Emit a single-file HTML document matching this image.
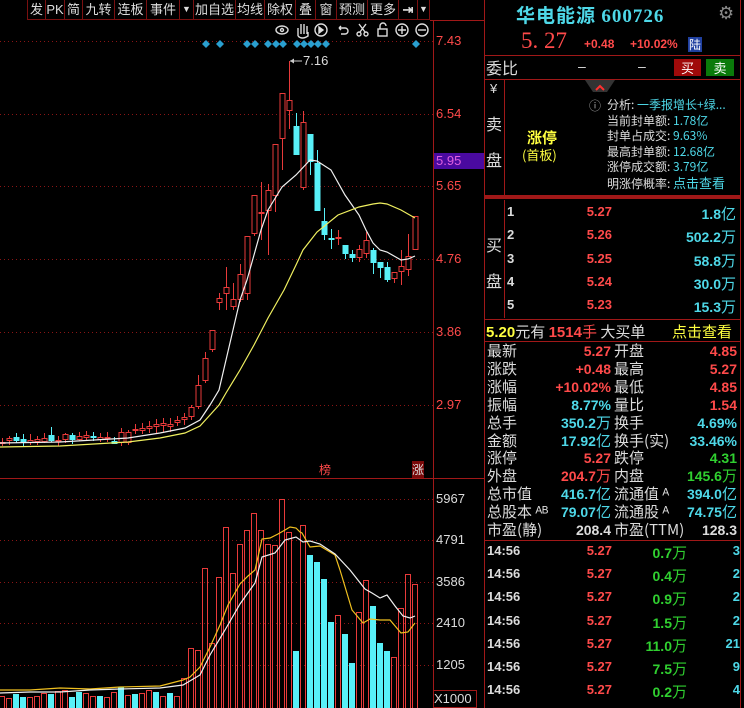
<!DOCTYPE html>
<html><head><meta charset="utf-8">
<style>
*{margin:0;padding:0;box-sizing:border-box}
body{width:744px;height:708px;background:#000;overflow:hidden;position:relative;font-family:"Liberation Sans","Noto Sans CJK SC",sans-serif;color:#ddd}
.a{position:absolute;white-space:nowrap}
.cj{font-family:"Noto Sans CJK SC","WenQuanYi Zen Hei",sans-serif}
.r{color:#ff4a4a}.c{color:#4ed8e8}.g{color:#30d030}.y{color:#ffff40}.w{color:#dcdcdc}
.b{font-weight:bold}
.tb{position:absolute;top:0;height:20px;border-right:1px solid #7a1010;border-bottom:1px solid #7a1010;font-size:13px;line-height:19px;text-align:center;color:#ddd;font-family:"Liberation Sans","Noto Sans CJK SC",sans-serif;overflow:hidden;white-space:nowrap}
.st{font-size:15px;line-height:18px}
.num{font-size:14px;font-weight:bold;text-align:right}
</style></head><body>
<svg class="a" style="left:0;top:0" width="744" height="708">
<g stroke="#8a1515" stroke-width="1" stroke-dasharray="1,3">
<line x1="0" y1="41.5" x2="433" y2="41.5"/><line x1="0" y1="114.5" x2="433" y2="114.5"/><line x1="0" y1="186.5" x2="433" y2="186.5"/><line x1="0" y1="259.5" x2="433" y2="259.5"/><line x1="0" y1="332.5" x2="433" y2="332.5"/><line x1="0" y1="405.5" x2="433" y2="405.5"/>
<line x1="0" y1="499.5" x2="433" y2="499.5"/><line x1="0" y1="540.5" x2="433" y2="540.5"/><line x1="0" y1="582.5" x2="433" y2="582.5"/><line x1="0" y1="623.5" x2="433" y2="623.5"/><line x1="0" y1="665.5" x2="433" y2="665.5"/>
</g>
<g stroke="#a01818" stroke-width="1">
<line x1="433.5" y1="20" x2="433.5" y2="708"/><line x1="484.5" y1="0" x2="484.5" y2="708"/><line x1="740.5" y1="0" x2="740.5" y2="708"/>
<line x1="0" y1="478.5" x2="484" y2="478.5"/>
<line x1="430" y1="20.5" x2="484" y2="20.5"/>
<line x1="485" y1="55.5" x2="740" y2="55.5"/><line x1="485" y1="79.5" x2="740" y2="79.5"/>
<line x1="504.5" y1="80" x2="504.5" y2="195"/><line x1="504.5" y1="200" x2="504.5" y2="318"/>
<line x1="485" y1="319.5" x2="740" y2="319.5"/><line x1="485" y1="341.5" x2="740" y2="341.5"/><line x1="485" y1="540.5" x2="740" y2="540.5"/>
</g>
<rect x="485" y="195" width="255" height="4" fill="#a01818"/>
<rect x="434" y="153" width="50" height="16" fill="#4a0aa0"/>
<rect x="412" y="461" width="12" height="17" fill="#7a0a0a"/>
<rect x="433.5" y="690.5" width="43" height="17" fill="none" stroke="#a01818"/>
<polygon points="585,80 615,80 607,92 593,92" fill="#333"/>
<polyline points="596,90 600,86 604,90" fill="none" stroke="#ff3030" stroke-width="2"/>
<g fill="#2a9fd0" id="dia"></g>
<g id="vb"></g><g id="cd"></g>
<g fill="none" stroke="#ddd" stroke-width="1.4">
<ellipse cx="282" cy="30" rx="6" ry="4"/><circle cx="282" cy="30" r="1.5"/>
<path d="M298 36 v-8 M301 34 v-10 M304 34 v-10 M307 34 v-8 M298 36 q4 4 10 0 v-4"/>
<circle cx="321" cy="30" r="6"/><path d="M319 27 l4 3 l-4 3z" fill="#ddd"/>
<path d="M339 28 h6 a3 3 0 0 1 0 6 h-4 M339 28 l2 -2 M339 28 l2 2"/>
<circle cx="359" cy="34" r="2"/><circle cx="366" cy="34" r="2"/><path d="M360 32 l6 -8 M365 32 l-6 -8"/>
<rect x="378" y="29" width="9" height="7"/><path d="M380 29 v-3 a3 3 0 0 1 6 0"/>
<circle cx="402" cy="30" r="6"/><path d="M398 30 h8 M402 26 v8"/>
<circle cx="422" cy="30" r="6"/><path d="M418 30 h8"/>
</g>
<g id="ml"></g>
<line x1="290" y1="61" x2="302" y2="61" stroke="#ccc"/>
</svg>

<div class="tb cj" style="left:27px;width:19px;border-left:1px solid #7a1010">发</div>
<div class="tb" style="left:46px;width:19px">PK</div>
<div class="tb cj" style="left:65px;width:18px">简</div>
<div class="tb cj" style="left:83px;width:32px">九转</div>
<div class="tb cj" style="left:115px;width:32px">连板</div>
<div class="tb cj" style="left:147px;width:33px">事件</div>
<div class="tb" style="left:180px;width:14px;font-size:9px">▼</div>
<div class="tb cj" style="left:194px;width:42px">加自选</div>
<div class="tb cj" style="left:236px;width:29px">均线</div>
<div class="tb cj" style="left:265px;width:31px">除权</div>
<div class="tb cj" style="left:296px;width:20px">叠</div>
<div class="tb cj" style="left:316px;width:21px">窗</div>
<div class="tb cj" style="left:337px;width:31px">预测</div>
<div class="tb cj" style="left:368px;width:31px">更多</div>
<div class="tb b" style="left:399px;width:19px;font-size:13px">⇥</div>
<div class="tb" style="left:418px;width:12px;font-size:9px">▼</div>

<div class="a r" style="left:436px;top:33px;font-size:13px">7.43</div>
<div class="a r" style="left:436px;top:106px;font-size:13px">6.54</div>
<div class="a" style="left:436px;top:153px;font-size:13px;color:#e060e0">5.95</div>
<div class="a r" style="left:436px;top:178px;font-size:13px">5.65</div>
<div class="a r" style="left:436px;top:251px;font-size:13px">4.76</div>
<div class="a r" style="left:436px;top:324px;font-size:13px">3.86</div>
<div class="a r" style="left:436px;top:397px;font-size:13px">2.97</div>
<div class="a w" style="left:436px;top:491px;font-size:13px">5967</div>
<div class="a w" style="left:436px;top:532px;font-size:13px">4791</div>
<div class="a w" style="left:436px;top:574px;font-size:13px">3586</div>
<div class="a w" style="left:436px;top:615px;font-size:13px">2410</div>
<div class="a w" style="left:436px;top:657px;font-size:13px">1205</div>
<div class="a w" style="left:434px;top:691px;font-size:13px">X1000</div>
<div class="a w" style="left:303px;top:53px;font-size:13px">7.16</div>
<div class="a r cj" style="left:319px;top:461px;font-size:12px">榜</div>
<div class="a w cj" style="left:412px;top:461px;font-size:12px">涨</div>

<div class="a c cj b" style="left:516px;top:1px;font-size:19px;letter-spacing:1px">华电能源 <span style="font-family:'Liberation Serif',serif">600726</span></div>
<div class="a" style="left:718px;top:3px;font-size:18px;color:#888">⚙</div>
<div class="a r" style="left:521px;top:28px;font-size:23px;font-family:'Liberation Serif',serif">5. 27</div>
<div class="a r b" style="left:584px;top:37px;font-size:12px">+0.48</div>
<div class="a r b" style="left:630px;top:37px;font-size:12px">+10.02%</div>
<div class="a cj" style="left:688px;top:37px;font-size:12px;background:#2040a0;color:#fff;padding:0 1px;line-height:15px">陆</div>
<div class="a w cj" style="left:486px;top:56px;font-size:16px;line-height:22px">委比</div>
<div class="a w" style="left:578px;top:58px;font-size:14px">–</div>
<div class="a w" style="left:638px;top:58px;font-size:14px">–</div>
<div class="a cj" style="left:674px;top:59px;width:27px;height:17px;background:#a00a0a;color:#fff;font-size:13px;text-align:center;line-height:17px">买</div>
<div class="a cj" style="left:706px;top:59px;width:28px;height:17px;background:#0a7a0a;color:#fff;font-size:13px;text-align:center;line-height:17px">卖</div>
<div class="a w" style="left:490px;top:81px;font-size:13px">¥</div>
<div class="a w cj" style="left:486px;top:111px;font-size:16px">卖</div>
<div class="a w cj" style="left:486px;top:147px;font-size:16px">盘</div>
<div class="a y cj b" style="left:527px;top:127px;font-size:15px">涨停</div>
<div class="a y cj" style="left:522px;top:145px;font-size:13px">(首板)</div>
<div class="a cj" style="left:589px;top:97px;font-size:12px;color:#aaa">ⓘ</div>
<div class="a cj" style="left:607px;top:97px;font-size:12px;line-height:15.6px"><span class="w">分析: </span><span class="c">一季报增长+绿...</span><br><span class="w">当前封单额: </span><span class="c">1.78亿</span><br><span class="w">封单占成交: </span><span class="c">9.63%</span><br><span class="w">最高封单额: </span><span class="c">12.68亿</span><br><span class="w">涨停成交额: </span><span class="c">3.79亿</span><br><span class="w">明涨停概率: </span><span class="c" style="font-size:13px">点击查看</span></div>

<div class="a w cj" style="left:486px;top:232px;font-size:16px">买</div>
<div class="a w cj" style="left:486px;top:268px;font-size:16px">盘</div>
<div id="bk"></div>
<div class="a cj" style="left:486px;top:321px;font-size:15px"><span class="y b" style="font-family:'Liberation Sans'">5.20</span><span class="w">元有 </span><span class="r b" style="font-family:'Liberation Sans'">1514</span><span class="r">手 </span><span class="w">大买单</span></div>
<div class="a y cj" style="left:672px;top:321px;font-size:15px">点击查看</div>
<div id="stt"></div>
<div id="trd"></div>

<script>
(function(){
var NS="http://www.w3.org/2000/svg";
function el(p,t,a){var e=document.createElementNS(NS,t);for(var k in a)e.setAttribute(k,a[k]);p.appendChild(e);return e;}
var cd=document.getElementById('cd'),vb=document.getElementById('vb'),dia=document.getElementById('dia'),ml=document.getElementById('ml');
var R="#e83a3a",C="#58f0f8";
var cs=[];
var early=[[441,444,1],[442,444,0],[438,441,0],[437,441,1],[439,442,1],[440,443,0],[439,442,0],[438,442,0],[435,441,1],[440,442,0],[434,440,0],[435,440,1],[436,440,0],[435,438,0],[436,438,1],[437,440,0],[437,439,0],[441,444,1],[432,443,0]];
var hiL=[[439,446],[438,446],[436,445],[433,443],[434,446],[434,445],[436,445],[433,443],[427,442],[436,446],[433,443],[433,444],[432,441],[431,440],[432,441],[433,442],[432,442],[437,444],[428,446]];
for(var i=0;i<early.length;i++){cs.push([0,early[i][0],early[i][1],hiL[i][0],hiL[i][1],early[i][2]]);}
cs.push([0,432,443,430,445,0]);
var mids=[[136,429,431,424,434,0],[143,428,431,423,434,0],[150,426,429,421,433,0],[157,424,427,419,433,0],[164,423,426,418,432,0],[171,424,427,418,432,0],[178,420,423,416,426,0],[185,417,420,413,425,0],[191,407,417,405,420,0],[198,385,407,375,409,0],[205,358,381,352,383,0],[212,330,350,330,352,0]];
cs=cs.concat(mids);
var late=[[219,298,303,293,310,0],[226,287,294,267,310,0],[233,299,307,283,310,0],[240,274,300,264,302,0],[247,236,294,236,300,0],[254,195,234,195,236,0],[261,212,214,182,240,0],[268,190,211,184,255,0],[275,144,196,144,212,0],[282,93,139,93,170,0],[289,100,111,61,129,0],[296,126,155,113,155,1],[303,122,188,111,190,0],[310,134,162,134,175,1],[317,163,211,150,211,1],[324,221,235,208,240,1],[331,238,240,229,249,1],[338,237,239,230,245,0],[345,245,254,245,259,1],[352,254,258,250,262,1],[359,249,258,245,262,0],[366,240,254,232,258,0],[373,250,263,248,274,1],[380,262,268,262,278,1],[387,267,280,262,282,1],[394,272,279,272,283,0],[401,266,272,250,285,0],[408,256,270,234,276,0],[415,216,250,216,250,0]];
cs=cs.concat(late);
var n=cs.length;for(var i=0;i<n;i++){cs[i][0]=415-(n-1-i)*7;}
cs.forEach(function(c){var col=c[5]?C:R;var x=c[0];
el(cd,'line',{x1:x+.5,x2:x+.5,y1:c[3],y2:c[4],stroke:col});
var h=Math.max(1,c[2]-c[1]);
if(c[5])el(cd,'rect',{x:x-2.5,y:c[1],width:6,height:h,fill:col});
else el(cd,'rect',{x:x-2,y:c[1]+.5,width:5,height:Math.max(1,h-1),fill:'#000',stroke:col});});
var vt=[693,696,698,694,697,697,696,693,694,691,690,697,692,693,696,696,697,692,687,695,694,693,690,692,696];
var vc=[1,0,0,1,1,0,0,0,1,0,0,1,1,0,0,1,0,0,1,0,1,0,0,1,0];
var vl=[678,648,650,568,643,577,527,573,544,530,513,530,544,545,499,532,651,525,555,562,579,622,615,634,663,612,580,606,643,651,657,608,574,584];
var cyi=[16,18,19,20,21,23,24,27,28,29];
for(var i=0;i<n;i++){var x=415-(n-1-i)*7,k=i-(n-vl.length),tp,cy;
if(k>=0){tp=vl[k];cy=cyi.indexOf(k)>=0;}else{tp=vt[i%vt.length];cy=vc[i%vc.length];}
if(cy)el(vb,'rect',{x:x-3,y:tp,width:6,height:708-tp,fill:C});
else el(vb,'rect',{x:x-2.5,y:tp+.5,width:5,height:708-tp,fill:'none',stroke:R});}
function pl(pts,col){el(ml,'polyline',{points:pts,stroke:col,fill:'none','stroke-width':1.2});}
pl("0,443 60,442 128,438 160,433 185,428 200,420 210,405 219,390 226,360 233,330 240,300 247,280 254,255 261,230 268,210 282,187 296,175 310,160 317,161 331,170 345,195 352,205 359,215 366,230 373,243 380,250 387,252 394,256 401,260 408,259 415,256","#f0f0f0");
pl("0,447 60,446 128,442 160,438 185,433 200,426 210,415 219,405 226,393 240,370 254,345 268,318 284,290 296,265 303,250 317,232 338,215 359,207 373,204 380,203 387,204 401,210 415,218","#f0f060");
pl("0,690 30,690 60,688 90,689 120,687 160,686 183,680 190,677 200,667 210,647 220,625 228,605 240,584 248,576 255,570 262,539 270,538 278,534 285,530 290,527 296,528 300,532 302,533 310,547 320,546 330,552 335,555 340,570 352,610 363,623 370,619 380,620 390,620 401,633 408,632 415,623","#f0c020");
pl("0,693 30,692 60,692 90,690 120,689 160,688 183,685 200,675 210,655 225,630 240,604 255,583 262,557 275,553 285,540 296,537 303,542 310,541 320,544 335,554 350,570 365,589 372,593 380,598 387,595 395,606 403,616 410,618 415,616","#f0f0f0");
[206,220,247,255,268,276,283,297,304,311,318,326,416].forEach(function(x){el(dia,'polygon',{points:(x)+',40 '+(x+4)+',44 '+x+',48 '+(x-4)+',44'});});
el(cd,'path',{d:'M290 61 l4 -2.5 v5z',fill:'#ccc'});
var bk=[["1","5.27","1.8亿"],["2","5.26","502.2万"],["3","5.25","58.8万"],["4","5.24","30.0万"],["5","5.23","15.3万"]];
var h='';bk.forEach(function(b,i){var y=204+i*23.3;
h+='<div class="a w b" style="left:507px;top:'+y+'px;font-size:13px">'+b[0]+'</div><div class="a r b" style="left:560px;width:52px;text-align:right;top:'+y+'px;font-size:13px">'+b[1]+'</div><div class="a c b" style="left:640px;width:96px;text-align:right;top:'+(y-1)+'px;font-size:14px">'+b[2].replace(/(亿|万)/,'<span class="cj" style="font-weight:normal;font-size:15px">$1</span>')+'</div>';});
document.getElementById('bk').innerHTML=h;
var st=[["最新","5.27","r","开盘","4.85","r"],["涨跌","+0.48","r","最高","5.27","r"],["涨幅","+10.02%","r","最低","4.85","r"],["振幅","8.77%","c","量比","1.54","r"],["总手","350.2万","c","换手","4.69%","c"],["金额","17.92亿","c","换手(实)","33.46%","c"],["涨停","5.27","r","跌停","4.31","g"],["外盘","204.7万","r","内盘","145.6万","g"],["总市值","416.7亿","c","流通值 ᴬ","394.0亿","c"],["总股本 ᴬᴮ","79.07亿","c","流通股 ᴬ","74.75亿","c"],["市盈(静)","208.4","w","市盈(TTM)","128.3","w"]];
h='';st.forEach(function(s,i){var y=342+i*17.9;
function v(t){return t.replace(/(亿|万)/,'<span class="cj" style="font-weight:normal;font-size:15px">$1</span>');}
h+='<div class="a w cj st" style="left:487px;top:'+y+'px">'+s[0]+'</div><div class="a num '+s[2]+'" style="left:540px;width:71px;top:'+y+'px;line-height:18px">'+v(s[1])+'</div><div class="a w cj st" style="left:614px;top:'+y+'px">'+s[3]+'</div><div class="a num '+s[5]+'" style="left:660px;width:77px;top:'+y+'px;line-height:18px">'+v(s[4])+'</div>';});
document.getElementById('stt').innerHTML=h;
var tr=[["0.7万","3"],["0.4万","2"],["0.9万","2"],["1.5万","2"],["11.0万","21"],["7.5万","9"],["0.2万","4"]];
h='';tr.forEach(function(t,i){var y=543+i*23.2;
h+='<div class="a w b" style="left:487px;top:'+y+'px;font-size:13px">14:56</div><div class="a r b" style="left:560px;width:52px;text-align:right;top:'+y+'px;font-size:13px">5.27</div><div class="a g b" style="left:620px;width:67px;text-align:right;top:'+(y-1)+'px;font-size:14px">'+t[0].replace('万','<span class="cj" style="font-weight:normal;font-size:15px">万</span>')+'</div><div class="a c b" style="left:700px;width:40px;text-align:right;top:'+y+'px;font-size:13px;overflow:hidden">'+t[1]+'</div>';});
document.getElementById('trd').innerHTML=h;
})();
</script>
</body></html>
